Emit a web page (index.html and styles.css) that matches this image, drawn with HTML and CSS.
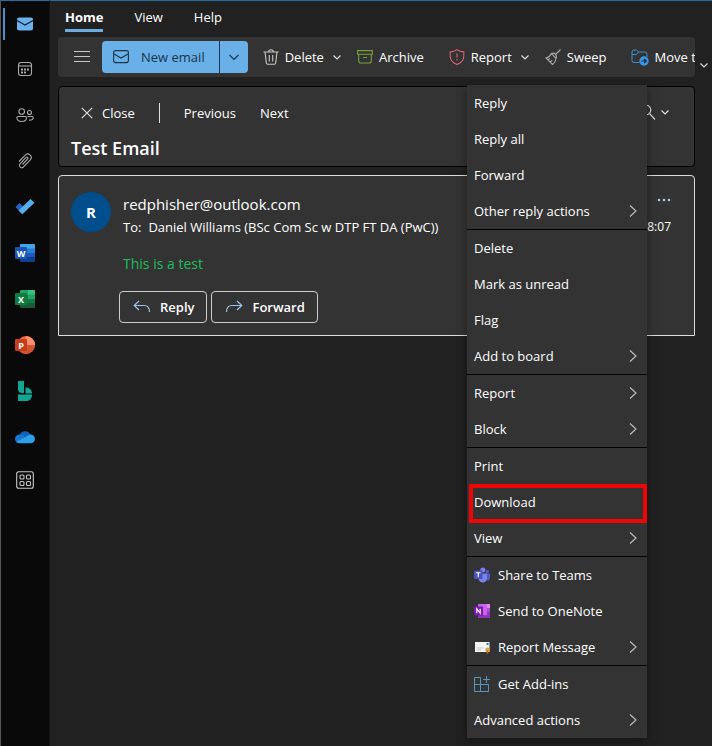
FILE: index.html
```html
<!DOCTYPE html>
<html lang="en">
<head>
<meta charset="utf-8">
<meta name="viewport" content="width=device-width, initial-scale=1">
<title>Test Email - Outlook</title>
<link rel="stylesheet" href="styles.css">
</head>
<body>
<div class="app">
  <nav class="rail" aria-label="Apps">
    <a class="rail-link current" href="#mail" aria-label="Mail"><svg width="20" height="20" viewBox="0 0 20 20"><rect x="2" y="3.500" width="16" height="13" rx="2" fill="#6bb1ec"/><path d="M2 6.500l8 4.500 8-4.500" fill="none" stroke="#0c2238" stroke-width="1.300"/></svg></a>
    <a class="rail-link" href="#calendar" aria-label="Calendar"><svg class="line" width="20" height="20" viewBox="0 0 20 20"><rect x="3.500" y="3.500" width="13" height="13" rx="2.500"/><path d="M3.500 7h13"/><path d="M6 10.500h2M9 10.500h2M12 10.500h2M6 13.500h2M9 13.500h2" stroke-width="1.800"/></svg></a>
    <a class="rail-link" href="#people" aria-label="People"><svg class="line" width="20" height="20" viewBox="0 0 20 20"><circle cx="6.700" cy="6.500" r="2.800"/><circle cx="14.500" cy="7.500" r="2"/><path d="M3.200 11.500h7a1.300 1.300 0 0 1 1.300 1.300c0 2.400-2 3.700-4.800 3.700s-4.800-1.300-4.800-3.700a1.300 1.300 0 0 1 1.300-1.300z"/><path d="M12.500 11.500H17a1.200 1.200 0 0 1 1.200 1.200c0 1.700-1.700 2.600-4 2.400"/></svg></a>
    <a class="rail-link" href="#files" aria-label="Files"><svg class="line" width="20" height="20" viewBox="0 0 20 20"><path d="M4 10.500l6-6.200a3.400 3.400 0 0 1 5.300 4.500l-6.800 7a2.300 2.300 0 0 1-3.500-3l6-6.300a1.100 1.100 0 0 1 1.700 1.500l-5.200 5.500"/></svg></a>
    <a class="rail-link" href="#todo" aria-label="To Do"><svg width="20" height="20" viewBox="0 0 20 20"><path d="M.5 10l4-4 5.700 5.700-3.600 4.300z" fill="#2563c4"/><path d="M7.300 17.300L3.500 13.500 15.500 2l4 3.700z" fill="#56aef0"/></svg></a>
    <a class="rail-link" href="#word" aria-label="Word"><svg width="20" height="20" viewBox="0 0 20 20"><path fill="#41a5ee" d="M6 1h13a1 1 0 0 1 1 1v4H5V2a1 1 0 0 1 1-1z"/><path fill="#2b7cd3" d="M5 5.500h15V10H5z"/><path fill="#185abd" d="M5 10h15v4.500H5z"/><path fill="#103f91" d="M5 14.500h15V18a1 1 0 0 1-1 1H6a1 1 0 0 1-1-1z"/><rect y="4" width="12" height="12" rx="1" fill="#1b55b3"/><text class="logo-letter" x="6" y="13.500">W</text></svg></a>
    <a class="rail-link" href="#excel" aria-label="Excel"><svg width="20" height="20" viewBox="0 0 20 20"><path fill="#21a366" d="M6 1h7v5H5V2a1 1 0 0 1 1-1z"/><path fill="#33c481" d="M13 1h6a1 1 0 0 1 1 1v4h-7z"/><path fill="#107c41" d="M5 5.500h8V14H5z"/><path fill="#21a366" d="M13 5.500h7V10h-7z"/><path fill="#107c41" d="M13 10h7v4.500h-7z"/><path fill="#185c37" d="M5 14h15v4a1 1 0 0 1-1 1H6a1 1 0 0 1-1-1z"/><rect y="4" width="12" height="12" rx="1" fill="#107c41"/><text class="logo-letter" x="6" y="13.500">X</text></svg></a>
    <a class="rail-link" href="#powerpoint" aria-label="PowerPoint"><svg width="20" height="20" viewBox="0 0 20 20"><circle cx="11" cy="10" r="9" fill="#ed6c47"/><path d="M11 1a9 9 0 0 1 9 9h-9z" fill="#ff8f6b"/><path d="M2 10h18a9 9 0 0 1-18 0z" fill="#d35230"/><rect y="4" width="12" height="12" rx="1" fill="#c43e1c"/><text class="logo-letter" x="6" y="13.500">P</text></svg></a>
    <a class="rail-link" href="#bookings" aria-label="Bookings"><svg width="20" height="20" viewBox="0 0 20 20"><path d="M3 0h6v12H7a4 4 0 0 1-4-4z" fill="#12a594"/><path d="M10.500 6.500c4 0 6.500 2.500 6.500 6h-6.500z" fill="#16a896"/><path d="M3 13.500h14c0 4-2 6.500-6 6.500H3z" fill="#12a594"/></svg></a>
    <a class="rail-link" href="#onedrive" aria-label="OneDrive"><svg width="20" height="20" viewBox="0 0 20 20"><path d="M4.500 8a6 6 0 0 1 11-.5L12 13H5z" fill="#0f62b5"/><path d="M0 12a4.500 4.500 0 0 1 7-3.800l6 3.300L8 16H4.300A4 4 0 0 1 0 12z" fill="#1878cf"/><path d="M15.500 7.500a4.300 4.300 0 0 1 0 8.800H4.500A4.300 4.300 0 0 1 1.500 15L13 8.500c.8-.6 1.600-1 2.500-1z" fill="#2ea0ea"/></svg></a>
    <a class="rail-link rail-more" href="#apps" aria-label="More apps"><svg class="line bright" width="20" height="20" viewBox="0 0 20 20"><rect x="1.700" y="1.700" width="16.600" height="16.600" rx="2"/><rect x="5" y="5" width="4" height="4" rx="1"/><rect x="11.500" y="5" width="4" height="4" rx="1"/><rect x="5" y="11.500" width="4" height="4" rx="1"/><rect x="11.500" y="11.500" width="4" height="4" rx="1"/></svg></a>
  </nav>

  <div class="workspace">
    <nav class="tabs" aria-label="Ribbon tabs">
      <a class="tab active" href="#home">Home</a>
      <a class="tab" href="#view">View</a>
      <a class="tab" href="#help">Help</a>
    </nav>

    <div class="toolbar-row">
      <div class="toolbar">
        <button class="nav-toggle" type="button" aria-label="Navigation pane"><svg class="line bright" width="16" height="16" viewBox="0 0 16 16"><path d="M0 2.500h16M0 7.500h16M0 12.500h16"/></svg></button>
        <div class="split">
          <button class="split-main" type="button"><svg width="16" height="16" viewBox="0 0 16 16"><rect x=".6" y="1.600" width="14.800" height="12" rx="2"/><path d="M1 5l7 4 7-4"/></svg><span>New email</span></button>
          <button class="split-more" type="button" aria-label="More new items"><svg width="10" height="10" viewBox="0 0 10 10"><path d="M.5 3L5 7.500 9.500 3"/></svg></button>
        </div>
        <button class="command" type="button"><svg class="line bright" width="16" height="16" viewBox="0 0 16 16"><path d="M.5 3h15M2 3l1.300 10.800a1.500 1.500 0 0 0 1.500 1.400h6.400a1.500 1.500 0 0 0 1.500-1.400L14 3M5.700 3a2.300 2.300 0 0 1 4.600 0M6.300 6v6.500M9.700 6v6.500"/></svg><span>Delete</span><svg class="chevron" width="8" height="8" viewBox="0 0 8 8"><path d="M.5 2.500L4 6l3.500-3.500"/></svg></button>
        <button class="command" type="button"><svg class="archive" width="16" height="16" viewBox="0 0 16 16"><path d="M.6 1.600h14.800v3.600H.6zM1.700 5.200V12a2 2 0 0 0 2 2h8.600a2 2 0 0 0 2-2V5.200M6 8.500h4"/></svg><span>Archive</span></button>
        <button class="command report" type="button"><svg class="shield" width="16" height="16" viewBox="0 0 16 16"><path d="M8 .6C6 2.200 3.800 2.800 1.200 2.900V7c0 4 2.300 6.800 6.800 8.400 4.500-1.600 6.800-4.400 6.800-8.400V2.900C12.200 2.800 10 2.200 8 .6zM8 4.500v4M8 10v1.500"/></svg><span>Report</span><svg class="chevron" width="8" height="8" viewBox="0 0 8 8"><path d="M.5 2.500L4 6l3.500-3.500"/></svg></button>
        <button class="command" type="button"><svg class="line" width="16" height="16" viewBox="0 0 16 16"><path d="M15.500.5L10.500 5.500M6.500 4.500c1.500-.7 3-.5 4 .8s1.200 2.700.5 4.200zM6.500 4.500L11 9.500c-.2 2.500-1.500 4.500-3.500 6L1 9c2.500-.5 4.200-2 5.500-4.500zM3 11l2-1.700M5.200 13.200l2-2"/></svg><span>Sweep</span></button>
        <button class="command move" type="button"><svg width="18" height="18" viewBox="0 0 18 18"><path d="M8.500 14.500H3a2 2 0 0 1-2-2V4a2 2 0 0 1 2-2h2.500l2 2H14a2 2 0 0 1 2 2v3M1 6.500h4.500l2-2.500" fill="none" stroke="#3f8fd2"/><circle cx="13" cy="13" r="4.700" fill="#3a96e6"/><path d="M10.500 13h4.500M13.200 11l2 2-2 2" fill="none" stroke="#10263c" stroke-width="1.200"/></svg><span>Move to</span></button>
      </div>
      <button class="toolbar-more" type="button" aria-label="Ribbon options"><svg class="chevron" width="8" height="8" viewBox="0 0 8 8"><path d="M.5 2.500L4 6l3.500-3.500"/></svg></button>
    </div>

    <header class="subject-card">
      <div class="subject-actions">
        <button class="close" type="button"><svg width="12" height="12" viewBox="0 0 12 12"><path d="M.8.8l10.400 10.400M11.200.8L.8 11.200"/></svg><span>Close</span></button>
        <button class="pager" type="button">Previous</button>
        <button class="pager" type="button">Next</button>
        <button class="zoom" type="button" aria-label="Zoom"><svg width="16" height="16" viewBox="0 0 16 16"><circle cx="6" cy="5" r="4.800"/><path d="M9.500 8.500l5.500 6"/></svg><svg class="chevron" width="8" height="8" viewBox="0 0 8 8"><path d="M.5 1.500L4 5l3.500-3.500"/></svg></button>
      </div>
      <h1 class="subject">Test Email</h1>
    </header>

    <article class="message">
      <div class="avatar">R</div>
      <div class="message-main">
        <p class="sender">redphisher@outlook.com</p>
        <p class="recipients"><span>To:</span><span>Daniel Williams (BSc Com Sc w DTP FT DA (PwC))</span></p>
        <p class="message-text">This is a test</p>
        <div class="responses">
          <button class="response" type="button"><svg width="18" height="14" viewBox="0 0 18 14"><path d="M6 1L1.200 5.500 6 10M1.500 5.500H11c3.500 0 5.500 2.500 5.500 6.500"/></svg><span>Reply</span></button>
          <button class="response" type="button"><svg width="18" height="14" viewBox="0 0 18 14"><path d="M12 1l4.800 4.500L12 10M16.500 5.500H7C3.500 5.500 1.500 8 1.500 12"/></svg><span>Forward</span></button>
        </div>
      </div>
      <div class="message-side">
        <button class="dots" type="button" aria-label="More actions"><svg width="14" height="4" viewBox="0 0 14 4"><circle cx="2" cy="2" r="1.300"/><circle cx="7" cy="2" r="1.300"/><circle cx="12" cy="2" r="1.300"/></svg></button>
        <time>18:07</time>
      </div>
    </article>
  </div>

  <div class="menu" role="menu">
    <div class="menu-group">
      <button class="menu-item" role="menuitem" type="button">Reply</button>
      <button class="menu-item" role="menuitem" type="button">Reply all</button>
      <button class="menu-item" role="menuitem" type="button">Forward</button>
      <button class="menu-item" role="menuitem" type="button">Other reply actions<svg class="more" width="8" height="12" viewBox="0 0 8 12"><path d="M1 .5L7 6l-6 5.500"/></svg></button>
    </div>
    <div class="menu-group">
      <button class="menu-item" role="menuitem" type="button">Delete</button>
      <button class="menu-item" role="menuitem" type="button">Mark as unread</button>
      <button class="menu-item" role="menuitem" type="button">Flag</button>
      <button class="menu-item" role="menuitem" type="button">Add to board<svg class="more" width="8" height="12" viewBox="0 0 8 12"><path d="M1 .5L7 6l-6 5.500"/></svg></button>
    </div>
    <div class="menu-group">
      <button class="menu-item" role="menuitem" type="button">Report<svg class="more" width="8" height="12" viewBox="0 0 8 12"><path d="M1 .5L7 6l-6 5.500"/></svg></button>
      <button class="menu-item" role="menuitem" type="button">Block<svg class="more" width="8" height="12" viewBox="0 0 8 12"><path d="M1 .5L7 6l-6 5.500"/></svg></button>
    </div>
    <div class="menu-group">
      <button class="menu-item" role="menuitem" type="button">Print</button>
      <button class="menu-item highlighted" role="menuitem" type="button">Download</button>
      <button class="menu-item" role="menuitem" type="button">View<svg class="more" width="8" height="12" viewBox="0 0 8 12"><path d="M1 .5L7 6l-6 5.500"/></svg></button>
    </div>
    <div class="menu-group">
      <button class="menu-item" role="menuitem" type="button"><svg width="16" height="16" viewBox="0 0 16 16"><circle cx="13.300" cy="4.500" r="1.700" fill="#5059c9"/><path d="M11 6.500h5v4.200c0 2-1.500 3.300-3.500 2.800z" fill="#5059c9"/><circle cx="8.800" cy="3" r="2.500" fill="#7b83eb"/><path d="M4.500 6.500H13v4.700c0 2.500-1.800 4.300-4.200 4.300s-4.300-1.800-4.300-4.300z" fill="#7b83eb"/><rect y="3.500" width="8.500" height="8.500" rx="1" fill="#4b53bc"/><path d="M2 5.700h4.500M4.300 5.700v4.500" stroke="#fff" stroke-width="1.100"/></svg>Share to Teams</button>
      <button class="menu-item" role="menuitem" type="button"><svg width="16" height="16" viewBox="0 0 16 16"><rect x="4" y="1" width="12" height="14" rx="1" fill="#ca64ea"/><path d="M13 1h2a1 1 0 0 1 1 1v3h-3z" fill="#e08bf5"/><path d="M13 5h3v3.500h-3z" fill="#ae4bd5"/><path d="M13 8.500h3V12h-3z" fill="#9332bf"/><path d="M4 12h12v2a1 1 0 0 1-1 1H5a1 1 0 0 1-1-1z" fill="#9332bf"/><rect y="3.500" width="9" height="9" rx="1" fill="#7719aa"/><path d="M2.800 10.300V5.700l3.400 4.600V5.700" fill="none" stroke="#fff" stroke-width="1.100"/></svg>Send to OneNote</button>
      <button class="menu-item" role="menuitem" type="button"><svg width="16" height="16" viewBox="0 0 16 16"><rect x="1" y="3" width="14.500" height="10" fill="#f4f4f4"/><rect x="12.500" y="4" width="2" height="2" fill="#2878d0"/><path d="M3 9h6M3 11h4" stroke="#c4c4c4"/><circle cx="13.500" cy="10.700" r="2.300" fill="#e8a33d"/><path d="M13.500 11v3.500" stroke="#b87922" stroke-width="1.500"/></svg>Report Message<svg class="more" width="8" height="12" viewBox="0 0 8 12"><path d="M1 .5L7 6l-6 5.500"/></svg></button>
    </div>
    <div class="menu-group">
      <button class="menu-item" role="menuitem" type="button"><svg class="addins" width="16" height="16" viewBox="0 0 16 16"><path d="M6.500 15.500v-14h-6v14h14v-7H.5M6.500 8.500v7M14.500 15.500v-7M12.500 0v7M9 3.500h7"/></svg>Get Add-ins</button>
      <button class="menu-item" role="menuitem" type="button">Advanced actions<svg class="more" width="8" height="12" viewBox="0 0 8 12"><path d="M1 .5L7 6l-6 5.500"/></svg></button>
    </div>
  </div>
</div>
</body>
</html>
```
FILE: styles.css
```css
* { box-sizing: border-box; }

body {
  margin: 0;
  background: #212121;
  color: #fff;
  font-family: "Open Sans", "Noto Sans", sans-serif;
  font-size: 13px;
  line-height: 20px;
}

button {
  padding: 0;
  border: 0;
  background: none;
  color: inherit;
  font: inherit;
  white-space: nowrap;
}

a { color: inherit; text-decoration: none; }
p, h1 { margin: 0; }
svg { flex: none; display: block; }

.app {
  position: relative;
  display: flex;
  min-height: 100vh;
  box-shadow: inset 0 1px #256da3;
}

/* App rail */
.rail {
  flex: none;
  width: 50px;
  border-left: 1px solid #555;
  border-right: 1px solid #111;
  border-top: 1px solid #256da3;
  background: #090909;
}
.rail-link {
  display: flex;
  align-items: center;
  justify-content: center;
  height: 46px;
}
.rail-link.current {
  height: 45px;
  background: linear-gradient(#4a8fca, #4a8fca) 2px 7px / 2px 32px no-repeat;
}
.rail-more { height: 40px; }
.line { fill: none; stroke: #aaa; stroke-width: 1.1; }
.line.bright { stroke: #c8c8c8; }
.logo-letter {
  fill: #fff;
  font-size: 9px;
  font-weight: 700;
  text-anchor: middle;
}

/* Ribbon */
.workspace { flex: 1; min-width: 0; padding-left: 8px; }
.tabs { display: flex; gap: 31px; padding: 7px 7px 5px; }
.tab { padding-bottom: 2px; border-bottom: 3px solid transparent; }
.tab.active { border-color: #6cacdf; font-weight: 700; }
.toolbar-row { display: flex; }
.toolbar {
  flex: 1;
  display: flex;
  align-items: center;
  min-width: 0;
  height: 40px;
  padding-left: 16px;
  overflow: hidden;
  border-radius: 4px;
  background: #333;
}
.toolbar-more {
  flex: none;
  width: 17px;
  padding-top: 24px;
  display: flex;
  justify-content: center;
}
.split {
  flex: none;
  display: flex;
  height: 32px;
  margin: 0 15px 0 12px;
  overflow: hidden;
  border-radius: 4px;
  background: #69afe8;
  color: #1b3448;
}
.split svg { fill: none; stroke: #1b3448; stroke-width: 1.1; }
.split-main { display: flex; align-items: center; gap: 12px; padding: 0 14px 0 11px; }
.split-more { padding: 0 9px; border-left: 1px solid #1d3a54; }
.command { flex: none; display: flex; align-items: center; gap: 6px; margin-right: 16px; }
.command .chevron { margin-left: 3px; }
.command.report { margin-left: 9px; }
.command.move { margin-left: 8px; }
.chevron { fill: none; stroke: #ddd; stroke-width: 1.2; }
.archive { fill: none; stroke: #7a9f3a; stroke-width: 1.1; }
.shield { fill: none; stroke: #dc626d; stroke-width: 1.1; }

/* Subject */
.subject-card {
  margin: 9px 17px 8px 0;
  padding: 16px 12px 5px;
  border: 1px solid #000;
  border-radius: 4px;
  background: #333;
}
.subject-actions { display: flex; align-items: center; gap: 24px; }
.close { display: flex; align-items: center; gap: 9px; padding: 0 24px 0 10px; border-right: 1px solid #ddd; }
.close svg, .zoom svg { fill: none; stroke: #ddd; stroke-width: 1.2; }
.zoom { display: flex; align-items: center; gap: 5px; margin-left: auto; padding-right: 13px; }
.subject { margin-top: 12px; font-size: 18px; line-height: 26px; font-weight: 600; }

/* Message */
.message {
  display: flex;
  margin-right: 17px;
  padding: 16px 12px 12px;
  border: 1px solid #ddd;
  border-radius: 4px 4px 0 0;
  background: #333;
}
.avatar {
  flex: none;
  width: 40px;
  height: 40px;
  border-radius: 50%;
  background: #004e8c;
  font-size: 15px;
  line-height: 40px;
  font-weight: 700;
  text-align: center;
}
.message-main { flex: 1; min-width: 0; padding-left: 12px; }
.sender { font-size: 15px; line-height: 24px; }
.recipients { display: flex; gap: 7px; white-space: nowrap; line-height: 22px; }
.message-text { margin-top: 16px; color: #1ebe5b; font-size: 14px; }
.responses { display: flex; gap: 4px; margin: 17px 0 0 -4px; }
.response {
  display: flex;
  align-items: center;
  gap: 9px;
  height: 32px;
  padding: 0 12px 0 13px;
  border: 1px solid #ccc;
  border-radius: 4px;
  font-weight: 600;
}
.response svg { fill: none; stroke: #9dbfe8; stroke-width: 1.2; }
.message-side { display: flex; flex-direction: column; align-items: flex-end; padding: 6px 11px 0 0; font-size: 12px; }
.dots svg { fill: #b9c3ea; }
.dots { margin-bottom: 15px; }

/* Context menu */
.menu {
  position: absolute;
  top: 85px;
  right: 65px;
  width: 180px;
  background: #333;
  box-shadow: 0 3px 10px rgba(0, 0, 0, .4);
}
.menu-group + .menu-group { border-top: 1px solid #000; }
.menu-item {
  position: relative;
  display: flex;
  align-items: center;
  gap: 8px;
  width: 100%;
  height: 36px;
  padding: 0 10px 0 7px;
}
.more { margin-left: auto; fill: none; stroke: #bbb; stroke-width: 1.2; }
.addins { fill: none; stroke: #5695c0; }
.highlighted::after {
  content: "";
  position: absolute;
  inset: 0 0 -3px 2px;
  border: 4px solid #ee0505;
  z-index: 1;
}
```
